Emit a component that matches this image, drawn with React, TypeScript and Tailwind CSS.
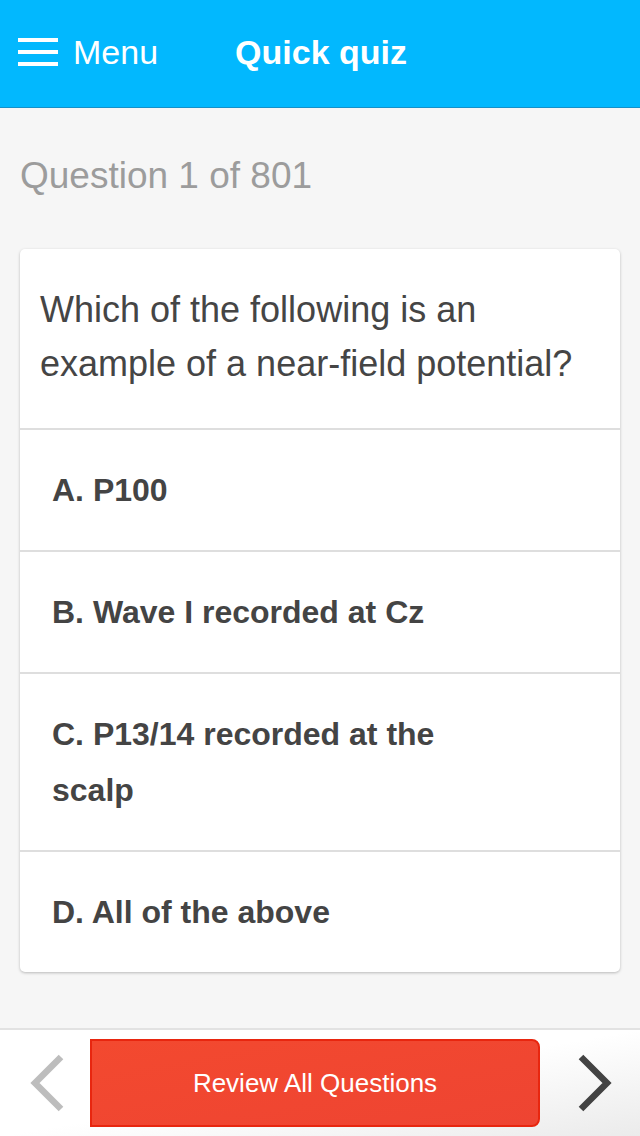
import { useState } from "react";

const options = [
    "A. P100",
    "B. Wave I recorded at Cz",
    "C. P13/14 recorded at the scalp",
    "D. All of the above",
];

function Chevron({ dir, color }: { dir: "left" | "right"; color: string }) {
    const points = dir === "left" ? "31,3 5,29 31,55" : "5,3 31,29 5,55";
    return (
        <svg width="36" height="58" viewBox="0 0 36 58">
            <polyline points={points} fill="none" stroke={color} strokeWidth="6.5" strokeLinecap="butt" strokeLinejoin="miter" />
        </svg>
    );
}

export default function App() {
    const [selected, setSelected] = useState<number | null>(null);

    return (
        <div className="w-[640px] h-[1136px] flex flex-col bg-[#f6f6f6] font-['Liberation_Sans',Arial,sans-serif]">
            <header className="h-[108px] shrink-0 bg-[#02b8fe] border-b border-[#1590c8] flex items-center pb-[3px]">
                <button className="flex items-center ml-[18px]">
                    <span className="flex flex-col gap-[8px] w-[40px]">
                        <span className="h-[4px] bg-white" />
                        <span className="h-[4px] bg-white" />
                        <span className="h-[4px] bg-white" />
                    </span>
                    <span className="ml-[15px] text-[34px] text-white leading-none">Menu</span>
                </button>
                <h1 className="ml-[77px] text-[34px] font-bold text-white leading-none">Quick quiz</h1>
            </header>

            <main className="flex-1 px-[20px]">
                <h2 className="mt-[46px] text-[37px] leading-[44px] text-[#9c9c9c]">Question 1 of 801</h2>

                <div className="mt-[51px] bg-white rounded-[5px] shadow-[0_1px_3px_rgba(0,0,0,0.25)]">
                    <p className="px-[20px] pt-[34px] pb-[37px] text-[36px] leading-[54px] text-[#454545]">
                        Which of the following is an example of a near-field potential?
                    </p>
                    {options.map((opt, i) => (
                        <div
                            key={opt}
                            onClick={() => setSelected(i)}
                            className={`border-t-2 border-[#dedede] pl-[32px] pr-[120px] py-[32px] text-[32px] leading-[56px] font-bold text-[#444] cursor-pointer ${selected === i ? "bg-[#f0f9ff]" : ""}`}
                        >
                            {opt}
                        </div>
                    ))}
                </div>
            </main>

            <footer className="h-[108px] shrink-0 border-t-2 border-[#e2e2e2] bg-gradient-to-br from-white via-white to-[#ebebeb] flex items-start pt-[9px]">
                <div className="w-[90px] h-[88px] flex items-center pl-[30px]">
                    <Chevron dir="left" color="#bdbdbd" />
                </div>
                <button className="w-[450px] h-[88px] bg-gradient-to-br from-[#f3492f] to-[#ee4432] border-2 border-[#e8260f] rounded-r-[8px] text-white text-[26px]">
                    Review All Questions
                </button>
                <div className="flex-1 h-[88px] flex items-center pl-[36px]">
                    <Chevron dir="right" color="#434343" />
                </div>
            </footer>
        </div>
    );
}
